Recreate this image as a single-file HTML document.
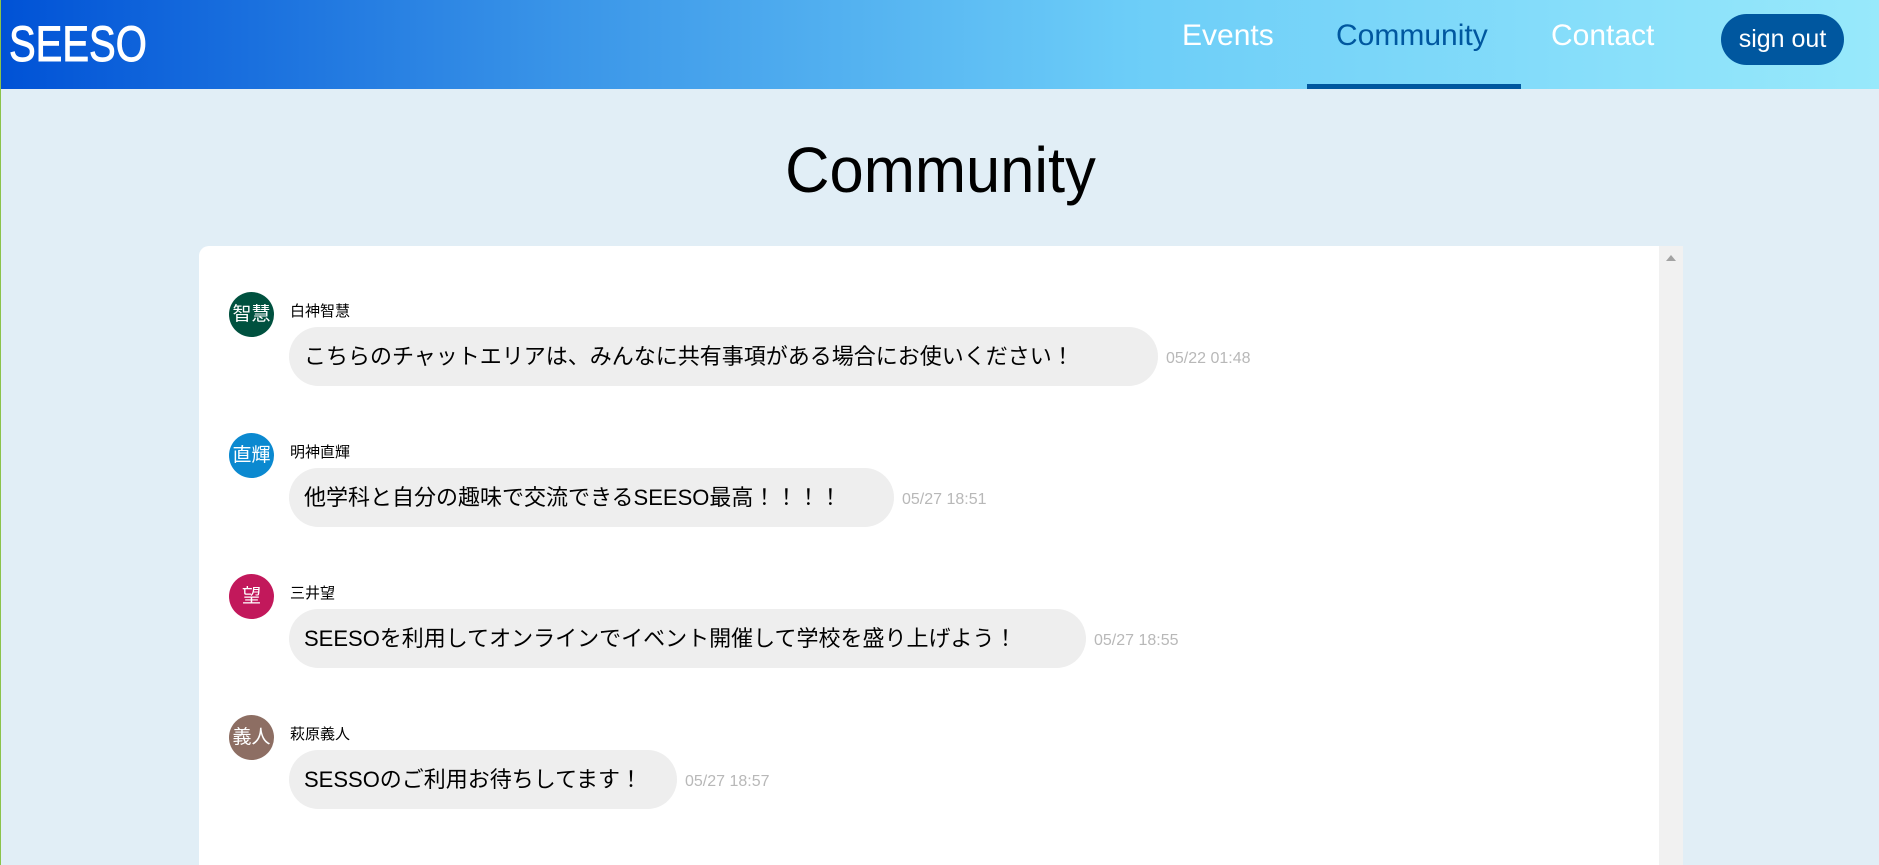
<!DOCTYPE html>
<html><head><meta charset="utf-8"><style>
*{margin:0;padding:0;box-sizing:border-box}
html,body{width:1879px;height:865px;overflow:hidden}
body{background:#e1eef6;font-family:"Liberation Sans","Noto Sans CJK JP",sans-serif;position:relative;border-left:1px solid #8bc34a}
.hdr{position:absolute;left:0;top:0;width:1879px;height:89px;background:linear-gradient(90deg,#0052d6 0%,#3a95e8 30%,#6ccdf8 60%,#98e9fb 100%)}
.logo{position:absolute;left:8px;top:14px;color:#fff;font-size:50px;line-height:60px;transform:scaleX(0.8);transform-origin:left;-webkit-text-stroke:1px #fff}
.nav{position:absolute;top:17px;font-size:30px;line-height:38px;color:#fff}
.ul{position:absolute;left:1306px;top:84px;width:214px;height:5px;background:#00579f}
.so{position:absolute;left:1720px;top:14px;width:123px;height:51px;border-radius:26px;background:#00579f;color:#fff;font-size:25px;text-align:center;line-height:51px}
h1{position:absolute;left:0;width:1879px;text-align:center;top:132px;font-size:64px;font-weight:normal;line-height:76px;color:#000;transform:scaleX(0.96)}
.panel{position:absolute;left:198px;top:246px;width:1484px;height:640px;background:#fff;border-radius:10px 0 0 0}
.sb{position:absolute;left:1658px;top:246px;width:24px;height:640px;background:#f1f1f1}
.sb:before{content:"";position:absolute;left:7px;top:9px;border-left:5px solid transparent;border-right:5px solid transparent;border-bottom:6px solid #a3a3a3}
.av{position:absolute;left:228px;width:45px;height:45px;border-radius:50%;color:#fff;font-size:19px;text-align:center;line-height:45px}
.nm{position:absolute;left:289px;font-size:15px;line-height:18px;color:#000}
.bb{position:absolute;left:288px;height:59px;border-radius:30px;background:#eeeeee;font-size:22px;line-height:59px;padding:0 15px;color:#000;white-space:nowrap}
.tm{position:absolute;font-size:16px;color:#b8b8b8;line-height:18px}
</style></head><body>
<div class="hdr"></div>
<div class="logo">SEESO</div>
<div class="nav" style="left:1181px">Events</div>
<div class="nav" style="left:1335px;color:#00579f">Community</div>
<div class="nav" style="left:1550px">Contact</div>
<div class="ul"></div>
<div class="so">sign out</div>
<h1>Community</h1>
<div class="panel"></div>
<div class="sb"></div>

<div class="av" style="top:292px;background:#00513f">智慧</div>
<div class="nm" style="top:303px">白神智慧</div>
<div class="bb" style="top:327px;width:869px">こちらのチャットエリアは、みんなに共有事項がある場合にお使いください！</div>
<div class="tm" style="left:1165px;top:350px">05/22 01:48</div>

<div class="av" style="top:433px;background:#0b89d0">直輝</div>
<div class="nm" style="top:444px">明神直輝</div>
<div class="bb" style="top:468px;width:605px">他学科と自分の趣味で交流できるSEESO最高！！！！</div>
<div class="tm" style="left:901px;top:491px">05/27 18:51</div>

<div class="av" style="top:574px;background:#c2185b">望</div>
<div class="nm" style="top:585px">三井望</div>
<div class="bb" style="top:609px;width:797px">SEESOを利用してオンラインでイベント開催して学校を盛り上げよう！</div>
<div class="tm" style="left:1093px;top:632px">05/27 18:55</div>

<div class="av" style="top:715px;background:#8d6e63">義人</div>
<div class="nm" style="top:726px">萩原義人</div>
<div class="bb" style="top:750px;width:388px">SESSOのご利用お待ちしてます！</div>
<div class="tm" style="left:684px;top:773px">05/27 18:57</div>
</body></html>
